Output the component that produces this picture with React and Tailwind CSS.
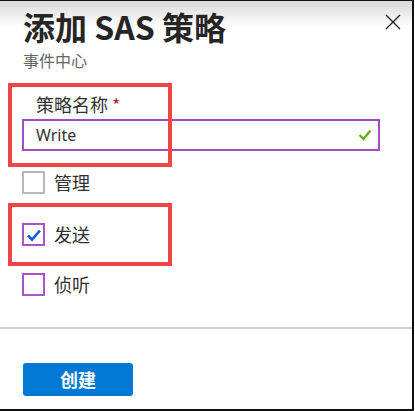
import React from "react";

function Box({ checked, purple }) {
  return (
    <div
      className={`w-[23px] h-[23px] box-border flex items-center justify-center border-2 ${
        purple ? "border-[#a855c9]" : "border-[#b8b8b8]"
      } bg-white`}
    >
      {checked && (
        <svg width="16" height="14" viewBox="0 0 16 14">
          <path d="M2 7.5 L6 11.5 L14 2.5" fill="none" stroke="#0b5cd8" strokeWidth="2.6" />
        </svg>
      )}
    </div>
  );
}

export default function App() {
  return (
    <div className="w-[414px] h-[411px] bg-white border-t border-r-2 border-b-2 border-[#111] box-border relative flex flex-col font-['Noto_Sans','Noto_Sans_CJK_SC',sans-serif] text-[#323130]">
      <div className="absolute inset-x-0 top-0 h-[26px] bg-gradient-to-b from-[#d9d9d9] to-white pointer-events-none" />
      <div className="relative flex justify-between pl-[23px] pr-[10px] pt-[2px]">
        <div>
          <div className="text-[32px] leading-[46px] font-bold text-[#252525] font-['Noto_Sans_CJK_SC','Noto_Sans',sans-serif] whitespace-nowrap">
            添加 SAS 策略
          </div>
          <div className="text-[16px] leading-[23px] text-[#666] font-['Noto_Sans_CJK_SC',sans-serif]">
            事件中心
          </div>
        </div>
        <svg className="mt-[10px]" width="18" height="18" viewBox="0 0 18 18">
          <path d="M2 2 L16 16 M16 2 L2 16" stroke="#222" strokeWidth="1.4" />
        </svg>
      </div>

      <div className="relative mt-[11px] pl-[22px] pr-[32px]">
        <div className="absolute left-[8px] top-0 w-[164px] h-[84px] border-4 border-[#f04545] box-border" />
        <div className="pt-[9px] pl-[14px] text-[18px] leading-[24px] font-['Noto_Sans_CJK_SC',sans-serif]">
          策略名称 <span className="text-[#a4262c]">*</span>
        </div>
        <div className="mt-[3px] h-[32px] border-2 border-[#9f4fc0] box-border flex items-center justify-between pl-[12px] pr-[6px]">
          <span className="text-[16px] font-['Noto_Sans',sans-serif]">Write</span>
          <svg width="14" height="12" viewBox="0 0 14 12">
            <path d="M1.5 6 L5.5 10 L12.5 1.5" fill="none" stroke="#64b01a" strokeWidth="2.4" />
          </svg>
        </div>
      </div>

      <div className="mt-[20px] pl-[22px] flex items-center gap-[9px] h-[23px]">
        <Box />
        <span className="text-[18px] font-['Noto_Sans_CJK_SC',sans-serif]">管理</span>
      </div>

      <div className="relative mt-[9px] h-[63px] flex items-center">
        <div className="absolute left-[8px] top-0 w-[164px] h-[63px] border-4 border-[#f04545] box-border" />
        <div className="pl-[22px] flex items-center gap-[9px]">
          <Box checked purple />
          <span className="text-[18px] font-['Noto_Sans_CJK_SC',sans-serif]">发送</span>
        </div>
      </div>

      <div className="mt-[7px] pl-[22px] flex items-center gap-[9px] h-[23px]">
        <Box purple />
        <span className="text-[18px] font-['Noto_Sans_CJK_SC',sans-serif]">侦听</span>
      </div>

      <div className="mt-[31px] h-[2px] bg-[#d0d0d0]" />

      <div className="mt-[34px] pl-[23px]">
        <button className="w-[110px] h-[33px] rounded-[3px] bg-[#0078d4] text-white text-[18px] font-bold font-['Noto_Sans_CJK_SC',sans-serif]">
          创建
        </button>
      </div>
    </div>
  );
}
